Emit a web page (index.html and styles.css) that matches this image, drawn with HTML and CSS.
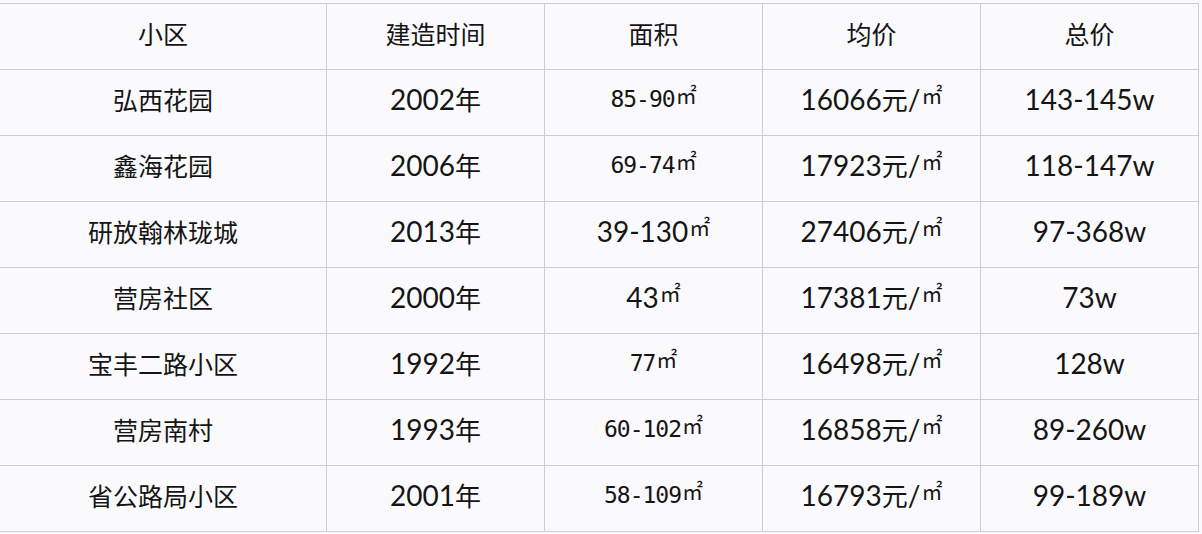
FILE: index.html
```html
<!DOCTYPE html>
<html lang="zh-CN">
<head>
<meta charset="utf-8">
<title>小区房价</title>
<link rel="stylesheet" href="styles.css">
</head>
<body>
<div class="table">
  <div class="cell cjk">小区</div>
  <div class="cell cjk">建造时间</div>
  <div class="cell cjk">面积</div>
  <div class="cell cjk">均价</div>
  <div class="cell cjk">总价</div>

  <div class="cell cjk">弘西花园</div>
  <div class="cell num">2002<span class="cjk">年</span></div>
  <div class="cell mono">85-90<span class="sqm">㎡</span></div>
  <div class="cell num">16066<span class="cjk">元</span>/<span class="sqm">㎡</span></div>
  <div class="cell num">143-145w</div>

  <div class="cell cjk">鑫海花园</div>
  <div class="cell num">2006<span class="cjk">年</span></div>
  <div class="cell mono">69-74<span class="sqm">㎡</span></div>
  <div class="cell num">17923<span class="cjk">元</span>/<span class="sqm">㎡</span></div>
  <div class="cell num">118-147w</div>

  <div class="cell cjk">研放翰林珑城</div>
  <div class="cell num">2013<span class="cjk">年</span></div>
  <div class="cell num">39-130<span class="sqm">㎡</span></div>
  <div class="cell num">27406<span class="cjk">元</span>/<span class="sqm">㎡</span></div>
  <div class="cell num">97-368w</div>

  <div class="cell cjk">营房社区</div>
  <div class="cell num">2000<span class="cjk">年</span></div>
  <div class="cell num">43<span class="sqm">㎡</span></div>
  <div class="cell num">17381<span class="cjk">元</span>/<span class="sqm">㎡</span></div>
  <div class="cell num">73w</div>

  <div class="cell cjk">宝丰二路小区</div>
  <div class="cell num">1992<span class="cjk">年</span></div>
  <div class="cell mono">77<span class="sqm">㎡</span></div>
  <div class="cell num">16498<span class="cjk">元</span>/<span class="sqm">㎡</span></div>
  <div class="cell num">128w</div>

  <div class="cell cjk">营房南村</div>
  <div class="cell num">1993<span class="cjk">年</span></div>
  <div class="cell mono">60-102<span class="sqm">㎡</span></div>
  <div class="cell num">16858<span class="cjk">元</span>/<span class="sqm">㎡</span></div>
  <div class="cell num">89-260w</div>

  <div class="cell cjk">省公路局小区</div>
  <div class="cell num">2001<span class="cjk">年</span></div>
  <div class="cell mono">58-109<span class="sqm">㎡</span></div>
  <div class="cell num">16793<span class="cjk">元</span>/<span class="sqm">㎡</span></div>
  <div class="cell num">99-189w</div>
</div>
</body>
</html>
```

FILE: styles.css
```css
html, body {
  margin: 0;
  padding: 0;
  background: #fafafc;
}

body {
  width: 1202px;
  height: 534px;
  overflow: hidden;
  padding-top: 3px;
  box-sizing: border-box;
  color: #151515;
}

.table {
  display: grid;
  grid-template-columns: 327px 218px 218px 218px 218px;
  grid-auto-rows: 66px;
  width: 1199px;
  border-top: 1px solid #cbced5;
}

.cell {
  box-sizing: border-box;
  border-right: 1px solid #cbced5;
  border-bottom: 1px solid #cbced5;
  display: flex;
  align-items: center;
  justify-content: center;
  white-space: nowrap;
  padding-bottom: 7px;
  line-height: 30px;
}

.cjk {
  font-family: "Noto Sans CJK SC", sans-serif;
  font-size: 25px;
}

.num {
  font-family: "Lato", "Noto Sans", "Noto Sans CJK SC", sans-serif;
  font-size: 28px;
}

.num .cjk {
  font-size: 26px;
}

.mono {
  font-family: "DejaVu Sans Mono", monospace;
  font-size: 23px;
  letter-spacing: -1px;
}

.sqm {
  font-family: "Noto Sans CJK SC", sans-serif;
  font-size: 21px;
  line-height: 1;
  position: relative;
  top: -5px;
  margin-left: 1px;
  letter-spacing: 0;
}
```
